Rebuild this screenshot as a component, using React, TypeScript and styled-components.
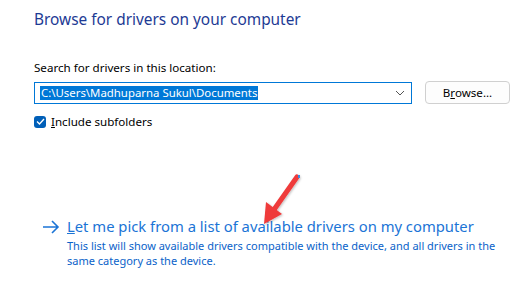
import React from "react";
import styled, { createGlobalStyle } from "styled-components";

const Global = createGlobalStyle`
  html, body { margin: 0; padding: 0; background: #ffffff; }
  body { width: 532px; height: 302px; overflow: hidden; font-family: "Noto Sans", "Open Sans", sans-serif; }
`;

const Page = styled.div`
  position: relative;
  width: 532px;
  height: 302px;
  box-sizing: border-box;
  padding: 10px 0 0 34px;
`;

const Title = styled.h1`
  margin: 0;
  font-size: 15.4px;
  line-height: 20px;
  font-weight: 400;
  color: #1d3a94;
`;

const Label = styled.div`
  margin-top: 30px;
  font-size: 11.6px;
  line-height: 16px;
  color: #000;
`;

const Row = styled.div`
  display: flex;
  align-items: center;
  margin-top: 5px;
  gap: 13px;
`;

const Combo = styled.div`
  width: 378px;
  height: 22px;
  box-sizing: border-box;
  border: 1px solid #0078d7;
  display: flex;
  align-items: center;
  padding: 0 6px 0 5px;
`;

const Selected = styled.span`
  background: #0078d7;
  color: #fff;
  font-size: 11.4px;
  line-height: 14px;
  padding: 0 1px;
`;

const Chevron = styled.svg`
  margin-left: auto;
  width: 10px;
  height: 6px;
`;

const Button = styled.button`
  width: 85px;
  height: 23px;
  box-sizing: border-box;
  border: 1px solid #d0d0d0;
  border-radius: 4px;
  background: #fdfdfd;
  font-family: inherit;
  font-size: 11.6px;
  color: #000;
  padding: 0;
`;

const CheckRow = styled.label`
  display: flex;
  align-items: center;
  gap: 5px;
  margin-top: 10px;
  font-size: 11.6px;
  color: #000;
`;

const Box = styled.span`
  width: 12px;
  height: 12px;
  border-radius: 3px;
  background: #005fb8;
  display: flex;
  align-items: center;
  justify-content: center;
`;

const LinkBlock = styled.div`
  display: flex;
  margin-top: 87px;
  margin-left: 8px;
  gap: 7px;
`;

const Arrow = styled.svg`
  width: 18px;
  height: 14px;
  margin-top: 4px;
  flex: none;
`;

const LinkText = styled.div`
  display: flex;
  flex-direction: column;
`;

const LinkTitle = styled.div`
  font-size: 14.8px;
  line-height: 20px;
  color: #1b74d6;
`;

const Desc = styled.div`
  margin-top: 2px;
  font-size: 11px;
  line-height: 15px;
  color: #0a62c9;
  width: 445px;
`;

const RedArrow = styled.svg`
  position: absolute;
  left: 255px;
  top: 169px;
  width: 55px;
  height: 62px;
  overflow: visible;
`;

export default function App() {
  return (
    <>
      <Global />
      <Page>
        <Title>Browse for drivers on your computer</Title>
        <Label>Search for drivers in this location:</Label>
        <Row>
          <Combo>
            <Selected>C:\Users\Madhuparna Sukul\Documents</Selected>
            <Chevron viewBox="0 0 10 6">
              <path d="M1 1 L5 5 L9 1" fill="none" stroke="#555" strokeWidth="1" />
            </Chevron>
          </Combo>
          <Button>
            B<u>r</u>owse...
          </Button>
        </Row>
        <CheckRow>
          <Box>
            <svg width="9" height="7" viewBox="0 0 9 7">
              <path d="M1 3.5 L3.5 6 L8 1" fill="none" stroke="#fff" strokeWidth="1.3" />
            </svg>
          </Box>
          <span>
            <u>I</u>nclude subfolders
          </span>
        </CheckRow>
        <LinkBlock>
          <Arrow viewBox="0 0 18 14">
            <path d="M1 7 H16 M10 1 L16 7 L10 13" fill="none" stroke="#1b74d6" strokeWidth="1.6" />
          </Arrow>
          <LinkText>
            <LinkTitle>
              <u>L</u>et me pick from a list of available drivers on my computer
            </LinkTitle>
            <Desc>
              This list will show available drivers compatible with the device, and all drivers in the same category as the device.
            </Desc>
          </LinkText>
        </LinkBlock>
        <RedArrow viewBox="0 0 55 62">
          <defs>
            <filter id="sh" x="-20%" y="-20%" width="140%" height="140%">
              <feDropShadow dx="1" dy="1" stdDeviation="1" floodColor="#000" floodOpacity="0.25" />
            </filter>
          </defs>
          <g filter="url(#sh)">
            <line x1="42" y1="8" x2="18" y2="42" stroke="#ef3b3b" strokeWidth="5" strokeLinecap="round" />
            <polygon points="9,55 11,33 27,45" fill="#ef3b3b" />
          </g>
          <rect x="43" y="6" width="2" height="3" fill="#3b8ee0" />
        </RedArrow>
      </Page>
    </>
  );
}
